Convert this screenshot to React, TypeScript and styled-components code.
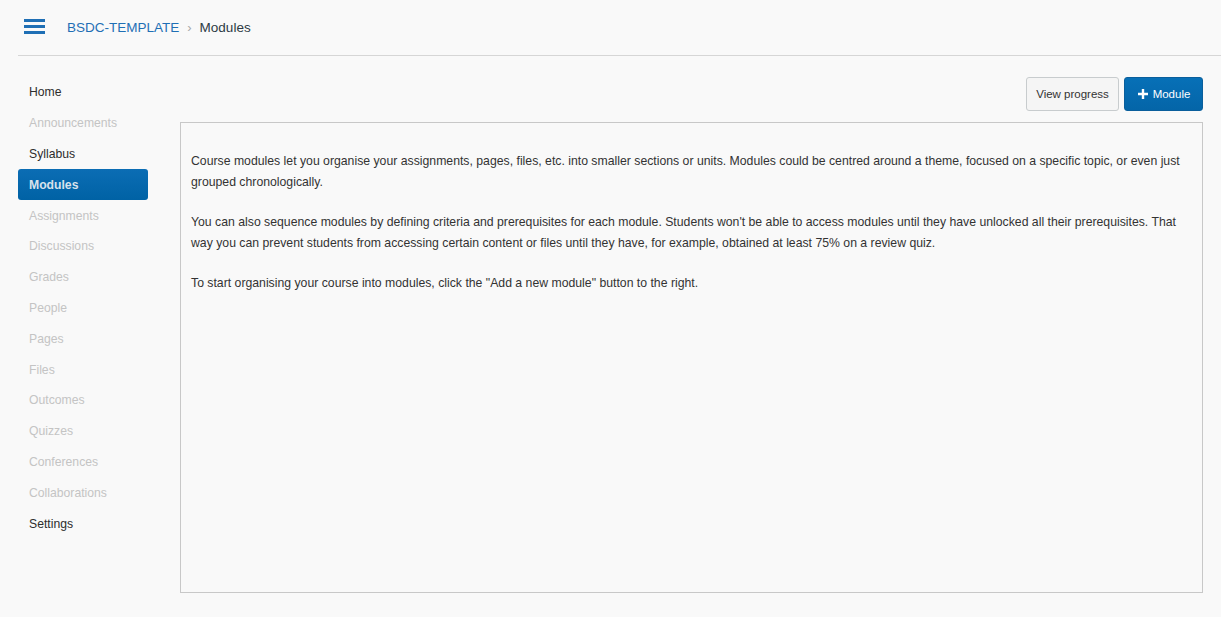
import styled, { createGlobalStyle } from "styled-components"

const GlobalStyle = createGlobalStyle`
  html, body {
    margin: 0;
    padding: 0;
    background: #f9f9f9;
    font-family: "Helvetica Neue", "Liberation Sans", Arial, sans-serif;
    color: #333;
  }
  * { box-sizing: border-box; }
`

const NAV = [
  { label: "Home", enabled: true },
  { label: "Announcements" },
  { label: "Syllabus", enabled: true },
  { label: "Modules", enabled: true, active: true },
  { label: "Assignments" },
  { label: "Discussions" },
  { label: "Grades" },
  { label: "People" },
  { label: "Pages" },
  { label: "Files" },
  { label: "Outcomes" },
  { label: "Quizzes" },
  { label: "Conferences" },
  { label: "Collaborations" },
  { label: "Settings", enabled: true },
]

const PARAGRAPHS = [
  "Course modules let you organise your assignments, pages, files, etc. into smaller sections or units. Modules could be centred around a theme, focused on a specific topic, or even just grouped chronologically.",
  "You can also sequence modules by defining criteria and prerequisites for each module. Students won't be able to access modules until they have unlocked all their prerequisites. That way you can prevent students from accessing certain content or files until they have, for example, obtained at least 75% on a review quiz.",
  'To start organising your course into modules, click the "Add a new module" button to the right.',
]

export default function App() {
  return (
    <Page>
      <GlobalStyle />
      <Header>
        <MenuButton aria-label="menu">
          <span />
          <span />
          <span />
        </MenuButton>
        <Crumbs>
          <CrumbLink>BSDC-TEMPLATE</CrumbLink>
          <CrumbSep>›</CrumbSep>
          <CrumbCurrent>Modules</CrumbCurrent>
        </Crumbs>
      </Header>
      <Main>
        <SideNav>
          {NAV.map(({ label, enabled, active }) => (
            <NavItem key={label} $enabled={!!enabled} $active={!!active}>
              {label}
            </NavItem>
          ))}
        </SideNav>
        <Content>
          <Toolbar>
            <GhostButton>View progress</GhostButton>
            <PrimaryButton>
              <svg width="12" height="12" viewBox="0 0 12 12">
                <path d="M6 1v10M1 6h10" stroke="#fff" strokeWidth="2.4" />
              </svg>
              Module
            </PrimaryButton>
          </Toolbar>
          <EmptyBox>
            {PARAGRAPHS.map((p, i) => (
              <Para key={i}>{p}</Para>
            ))}
          </EmptyBox>
        </Content>
      </Main>
    </Page>
  )
}

const Page = styled.div`
  display: flex;
  flex-direction: column;
  height: 617px;
  padding-left: 18px;
`

const Header = styled.header`
  display: flex;
  align-items: center;
  height: 56px;
  padding: 0 0 2px 6px;
  border-bottom: 1px solid #d6d6d6;
`

const MenuButton = styled.div`
  display: flex;
  flex-direction: column;
  gap: 3px;
  width: 21px;
  margin-right: 22px;
  span {
    display: block;
    height: 3px;
    background: #1f6fb5;
  }
`

const Crumbs = styled.nav`
  display: flex;
  align-items: center;
  font-size: 13.5px;
  padding-top: 1px;
`

const CrumbLink = styled.span`
  color: #1f6fb5;
`

const CrumbSep = styled.span`
  color: #a8a8a8;
  margin: 0 8px;
  font-size: 13px;
`

const CrumbCurrent = styled.span`
  color: #2d3b45;
`

const Main = styled.div`
  display: flex;
  flex: 1;
  gap: 32px;
  padding: 21px 18px 24px 0;
  min-height: 0;
`

const SideNav = styled.nav`
  display: flex;
  flex-direction: column;
  width: 130px;
  flex-shrink: 0;
`

const NavItem = styled.div<{ $enabled: boolean; $active: boolean }>`
  display: flex;
  align-items: center;
  height: 30.8px;
  padding-left: 11px;
  font-size: 12.2px;
  border-radius: 3px;
  color: ${(p) => (p.$active ? "#d8e2ec" : p.$enabled ? "#2d2d2d" : "#c4c4c4")};
  font-weight: ${(p) => (p.$active ? 700 : 400)};
  background: ${(p) => (p.$active ? "linear-gradient(#0b6db4, #0062a5)" : "transparent")};
`

const Content = styled.section`
  display: flex;
  flex-direction: column;
  flex: 1;
  min-width: 0;
`

const Toolbar = styled.div`
  display: flex;
  justify-content: flex-end;
  gap: 5px;
  height: 34px;
  margin-bottom: 11px;
`

const GhostButton = styled.button`
  width: 93px;
  height: 34px;
  border: 1px solid #c8ccce;
  border-radius: 3px;
  background: #f5f5f5;
  color: #333;
  font-family: inherit;
  font-size: 11.5px;
`

const PrimaryButton = styled.button`
  display: flex;
  align-items: center;
  justify-content: center;
  gap: 4px;
  width: 79px;
  height: 34px;
  border: 1px solid #0a5f9c;
  border-radius: 3px;
  background: linear-gradient(#0770b7, #0465a8);
  color: #fff;
  font-family: inherit;
  font-size: 11.5px;
  font-weight: 500;
`

const EmptyBox = styled.div`
  flex: 1;
  border: 1px solid #c8c8c8;
  padding: 28px 10px 0 10px;
`

const Para = styled.p`
  margin: 0 0 19px;
  font-size: 12.25px;
  line-height: 21px;
  color: #333;
`
